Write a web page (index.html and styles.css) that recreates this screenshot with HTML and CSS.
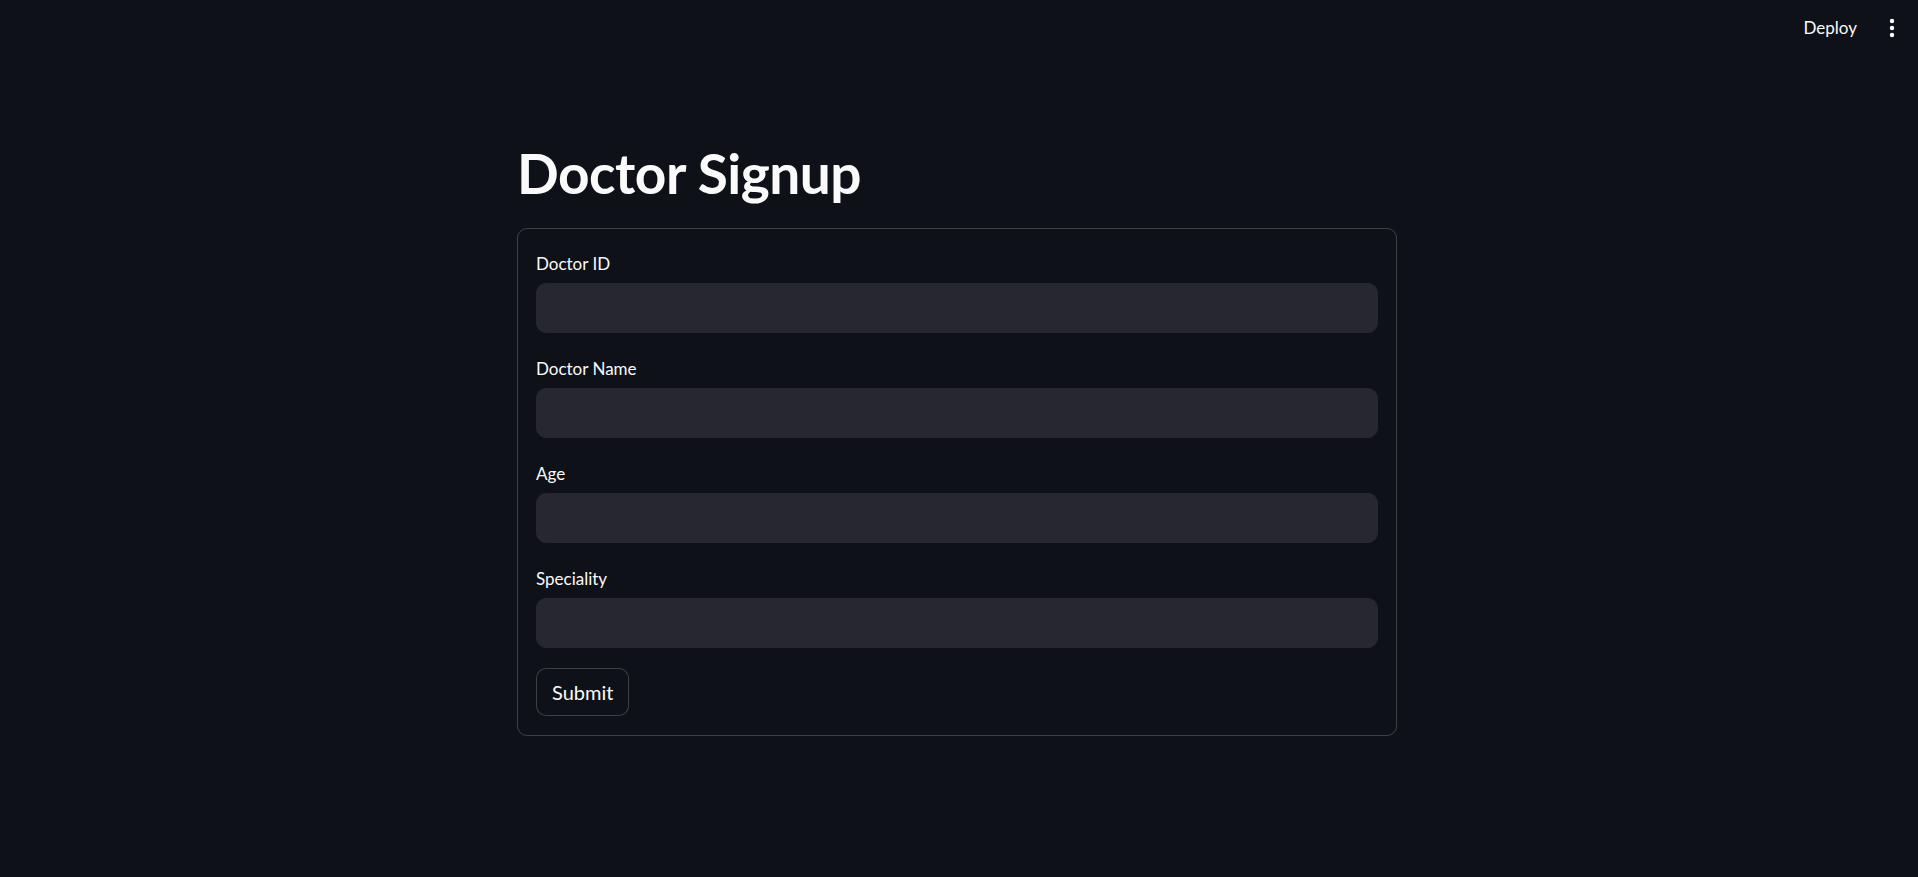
FILE: index.html
```html
<!DOCTYPE html>
<html lang="en">
<head>
<meta charset="utf-8">
<title>Doctor Signup</title>
<link rel="stylesheet" href="styles.css">
</head>
<body>
<header class="topbar">
  <button class="deploy">Deploy</button>
  <button class="menu" aria-label="Main menu">
    <svg width="6" height="20" viewBox="0 0 6 20"><circle cx="3" cy="3" r="2.2" fill="#fafafa"/><circle cx="3" cy="10" r="2.2" fill="#fafafa"/><circle cx="3" cy="17" r="2.2" fill="#fafafa"/></svg>
  </button>
</header>
<main class="main">
  <div class="block">
    <h1 class="title">Doctor Signup</h1>
    <form class="form">
      <div class="field">
        <label class="label">Doctor ID</label>
        <input class="input" type="text">
      </div>
      <div class="field">
        <label class="label">Doctor Name</label>
        <input class="input" type="text">
      </div>
      <div class="field">
        <label class="label">Age</label>
        <input class="input" type="text">
      </div>
      <div class="field">
        <label class="label">Speciality</label>
        <input class="input" type="text">
      </div>
      <div class="actions">
        <button class="submit" type="button">Submit</button>
      </div>
    </form>
  </div>
</main>
</body>
</html>
```
FILE: styles.css
```css
* { box-sizing: border-box; }
html, body { margin: 0; padding: 0; }
body {
  background: #0e1117;
  color: #fafafa;
  font-family: "Lato", "Noto Sans", sans-serif;
  height: 877px;
  overflow: hidden;
}
.topbar {
  height: 55px;
  display: flex;
  justify-content: flex-end;
  align-items: center;
  padding-right: 14px;
}
.deploy {
  background: transparent;
  border: none;
  color: #fafafa;
  font-family: inherit;
  font-size: 17px;
  padding: 0 23px 0 16px;
  height: 40px;
}
.menu {
  background: transparent;
  border: none;
  width: 24px;
  height: 40px;
  display: flex;
  align-items: center;
  justify-content: center;
  padding: 0;
}
.main {
  display: flex;
  justify-content: center;
  padding-right: 4px;
  padding-top: 85px;
}
.block {
  width: 880px;
}
.title {
  margin: 0 0 22px 0;
  font-size: 55px;
  font-weight: 700;
  line-height: 66px;
  letter-spacing: -0.5px;
}
.form {
  border: 1px solid rgba(250, 250, 250, 0.2);
  border-radius: 10px;
  padding: 19px 18px;
  display: flex;
  flex-direction: column;
  gap: 20px;
}
.field {
  display: flex;
  flex-direction: column;
}
.label {
  height: 30px;
  margin-bottom: 5px;
  display: flex;
  align-items: center;
  font-size: 17px;
}
.input {
  height: 50px;
  background: #262730;
  border: 1px solid #262730;
  border-radius: 10px;
  color: #fafafa;
  font-family: inherit;
  font-size: 20px;
  padding: 0 16px;
  outline: none;
}
.actions { display: flex; }
.submit {
  height: 48px;
  padding: 0 15px;
  min-width: 93px;
  background: #0e1117;
  border: 1px solid rgba(250, 250, 250, 0.2);
  border-radius: 10px;
  color: #fafafa;
  font-family: inherit;
  font-size: 20px;
}
```
